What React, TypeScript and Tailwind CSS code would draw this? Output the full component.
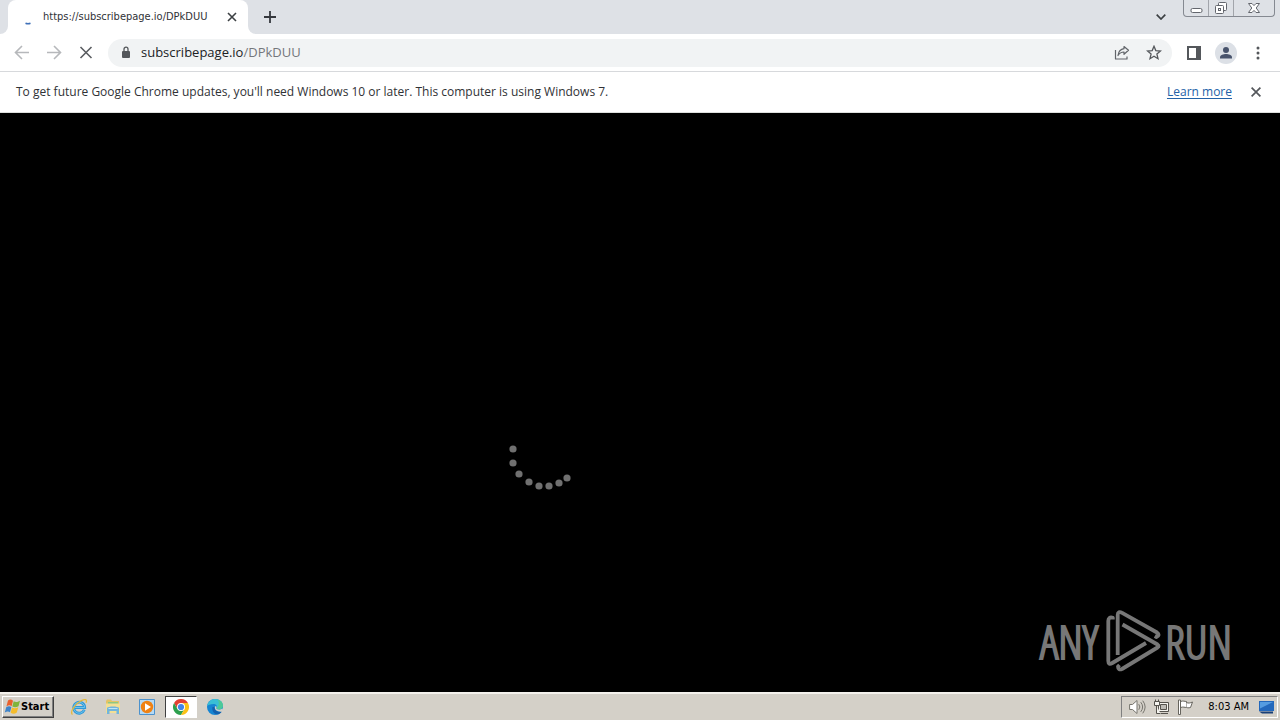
import type { ReactNode } from "react";

const dots = [
  [13, 14], [13, 28], [19, 39], [29, 47], [39, 51], [49, 51], [59, 48], [67, 43],
];

function IconButton({ label, className = "", children }: { label: string; className?: string; children: ReactNode }) {
  return (
    <button type="button" aria-label={label} className={`flex shrink-0 items-center justify-center ${className}`}>
      {children}
    </button>
  );
}

function TabStrip() {
  return (
    <header className="flex h-[34px] items-start bg-[#dee1e6] pr-[5px]">
      <div className="flex h-full w-2 items-end bg-white">
        <span className="h-full w-2 rounded-br-lg bg-[#dee1e6]" />
      </div>
      <div className="flex h-full w-60 items-center rounded-t-lg bg-white pr-2 pl-3">
        <svg width="16" height="16" viewBox="0 0 16 16" className="mr-[7px] shrink-0" fill="none" aria-hidden="true">
          <path d="M5.500 14.300Q8 15.200 10.500 14.300" stroke="#3f70b8" strokeWidth="1.700" />
        </svg>
        <span className="flex-1 text-[11px] whitespace-nowrap text-[#303236]">https://subscribepage.io/DPkDUU</span>
        <IconButton label="Close tab" className="size-4">
          <svg width="10" height="10" viewBox="0 0 10 10" stroke="#3c4043" strokeWidth="1.600">
            <path d="M1 1l8 8M9 1L1 9" />
          </svg>
        </IconButton>
      </div>
      <div className="flex h-full w-2 items-end bg-white">
        <span className="h-full w-2 rounded-bl-lg bg-[#dee1e6]" />
      </div>
      <IconButton label="New tab" className="h-[34px] w-7">
        <svg width="12" height="12" viewBox="0 0 12 12" stroke="#35383d" strokeWidth="1.800">
          <path d="M6 0v12M0 6h12" />
        </svg>
      </IconButton>
      <div className="flex-1" />
      <IconButton label="Search tabs" className="mr-3 h-[34px] w-5">
        <svg width="10" height="6" viewBox="0 0 10 6" fill="none" stroke="#3c4043" strokeWidth="1.700">
          <path d="M.7.7L5 5 9.300.7" />
        </svg>
      </IconButton>
      <div className="flex h-[17px] overflow-hidden rounded-b border border-t-0 border-[#858991]">
        <IconButton label="Minimize" className="w-[25px] border-r border-[#a2a5ab]">
          <svg width="13" height="16" viewBox="0 0 13 16" fill="#fff" stroke="#63666d">
            <rect x="1" y="8.500" width="11" height="4" rx="1.500" />
          </svg>
        </IconButton>
        <IconButton label="Restore" className="w-[25px] border-r border-[#a2a5ab]">
          <svg width="14" height="16" viewBox="0 0 14 16" fill="#fff" stroke="#63666d">
            <rect x="4.500" y="2.500" width="8" height="8" rx="1" />
            <rect x="1.500" y="5.500" width="8" height="8" rx="1" />
            <rect x="4.500" y="8.500" width="2" height="2" />
          </svg>
        </IconButton>
        <IconButton label="Close window" className="w-[40px]">
          <svg width="14" height="16" viewBox="0 0 14 16" fill="#fff" stroke="#63666d" strokeLinejoin="round">
            <path d="M1.500 3.500h3.500L7 5.600l2-2.100h3.500L9.200 8l3.300 4.500H9L7 10.400 5 12.500H1.500L4.800 8z" />
          </svg>
        </IconButton>
      </div>
    </header>
  );
}

function Toolbar() {
  return (
    <nav className="flex h-[38px] items-center border-b border-[#d7d9dc] bg-white px-1.5">
      <IconButton label="Back" className="size-8">
        <svg width="16" height="16" viewBox="0 0 16 16" fill="none" stroke="#b6b8bb" strokeWidth="1.600">
          <path d="M15 7.500H2M8 1L1.500 7.500 8 14" />
        </svg>
      </IconButton>
      <IconButton label="Forward" className="size-8">
        <svg width="16" height="16" viewBox="0 0 16 16" fill="none" stroke="#b6b8bb" strokeWidth="1.600">
          <path d="M1 7.500h13M8 1l6.500 6.500L8 14" />
        </svg>
      </IconButton>
      <IconButton label="Stop loading" className="size-8">
        <svg width="14" height="14" viewBox="0 0 14 14" stroke="#5a5d61" strokeWidth="1.600">
          <path d="M1.500 1l11 11M12.500 1l-11 11" />
        </svg>
      </IconButton>
      <div className="ml-1.5 flex h-7 flex-1 items-center rounded-full bg-[#f1f3f4] pr-2 pl-3">
        <svg width="12" height="14" viewBox="0 0 12 14" className="mr-2 shrink-0" aria-hidden="true">
          <rect x="2" y="5" width="8" height="7" rx="1" fill="#54575b" />
          <path d="M4 5.500V3.200a2 2 0 0 1 4 0v2.300" fill="none" stroke="#54575b" strokeWidth="1.300" />
        </svg>
        <a href="#address" className="flex-1 pl-px font-['Open_Sans',sans-serif] text-[13px] whitespace-nowrap text-[#202124]">
          subscribepage.io<span className="text-[#74777b]">/DPkDUU</span>
        </a>
        <IconButton label="Share" className="mr-3 size-5">
          <svg width="16" height="16" viewBox="0 0 16 16" fill="none" stroke="#62656a" strokeWidth="1.200" strokeLinejoin="round">
            <path d="M1.500 5v9h11.500V11.500M10 1.500l4.500 3.800L10 9.300V7C7.500 7 5.600 8 4 10.500c.4-3.300 2.500-6.300 6-6.800z" />
          </svg>
        </IconButton>
        <IconButton label="Bookmark this tab" className="size-5">
          <svg width="16" height="16" viewBox="0 0 16 16" fill="none" stroke="#54575b" strokeWidth="1.300">
            <path d="M8 1.300l1.800 4.300 4.700.4-3.600 3.100L12 13.700 8 11.200l-4 2.500 1.100-4.600L1.500 6l4.700-.4z" />
          </svg>
        </IconButton>
      </div>
      <IconButton label="Side panel" className="ml-1.5 size-8">
        <svg width="14" height="14" viewBox="0 0 14 14" fill="#54575b">
          <path fillRule="evenodd" d="M0 0h14v14H0zM2 2v10h7V2z" />
        </svg>
      </IconButton>
      <IconButton label="Profile" className="size-8">
        <svg width="22" height="22" viewBox="0 0 22 22">
          <circle cx="11" cy="11" r="11" fill="#dce0e6" />
          <circle cx="11" cy="8" r="3" fill="#48536c" />
          <path d="M5 16.500v-1.200C5 13 8.500 12 11 12s6 1 6 3.300v1.200z" fill="#48536c" />
        </svg>
      </IconButton>
      <IconButton label="Menu" className="size-8">
        <svg width="4" height="14" viewBox="0 0 4 14" fill="#54575b">
          <circle cx="2" cy="2" r="1.500" />
          <circle cx="2" cy="7" r="1.500" />
          <circle cx="2" cy="12" r="1.500" />
        </svg>
      </IconButton>
    </nav>
  );
}

function UpdateNotice() {
  return (
    <div className="flex h-[41px] items-center border-b border-[#dde0dd] bg-white px-4 font-['Open_Sans',sans-serif] text-xs text-[#303236]">
      <p className="flex-1">
        To get future Google Chrome updates, you'll need Windows 10 or later. This computer is using Windows 7.
      </p>
      <a href="#learn" className="text-[#2262a8] underline underline-offset-2">Learn more</a>
      <IconButton label="Dismiss" className="ml-4 size-4">
        <svg width="10" height="10" viewBox="0 0 10 10" stroke="#54575b" strokeWidth="1.700">
          <path d="M.6.6l8.800 8.800M9.400.6L.6 9.400" />
        </svg>
      </IconButton>
    </div>
  );
}

function Watermark() {
  return (
    <div className="absolute right-12 bottom-5 flex items-center gap-1 font-['Open_Sans_Condensed_Light','Roboto_Condensed',sans-serif] text-[46px] leading-none text-[#777] [-webkit-text-stroke:2px_#777]">
      <span className="mr-1">ANY</span>
      <svg width="55" height="62" viewBox="0 0 55 62" fill="none" stroke="#777" strokeWidth="3.800" strokeLinejoin="round" aria-hidden="true">
        <path d="M6.800 9.500V7.800C4 6.500 2.300 8.500 2.300 11v40c0 3 1.500 3.500 4 2L40 33" />
        <path d="M11.700 45V5c0-3 2-3.500 4-2.300L51 22.500c2.300 1.500 2 3.500-.5 4.500l-1.700-1" />
        <path d="M16.500 14.500L51.500 34.500c1.500 1 1.500 2 0 3L16 59c-2.500 1-4 0-4-2.500l1.500-1.500" />
      </svg>
      <span>RUN</span>
    </div>
  );
}

function PageView() {
  return (
    <main className="relative flex-1 overflow-hidden bg-black">
      <svg width="80" height="60" viewBox="0 0 80 60" className="absolute top-[322px] left-[39.1%]" fill="#707070" role="img" aria-label="Loading">
        {dots.map(([x, y]) => (
          <circle key={`${x}-${y}`} cx={x} cy={y} r="3.600" />
        ))}
      </svg>
      <Watermark />
    </main>
  );
}

function Taskbar() {
  return (
    <footer className="flex h-7 items-center border-t-2 border-[#f3f1ec] bg-[#d4d0c8] px-0.5">
      <button
        type="button"
        className="flex h-[22px] w-[52px] items-center border border-t-white border-r-[#404040] border-b-[#404040] border-l-white pl-px text-[11px] font-bold text-black shadow-[inset_-1px_-1px_0_#808080]"
      >
        <svg width="17" height="16" viewBox="0 0 17 16" className="shrink-0" aria-hidden="true">
          <path d="M4 1.500c2-1.500 3.500-1 5 .3L7.600 7.200c-1.500-1.200-3-1.200-5.200.2z" fill="#e9602c" />
          <path d="M9.700 2.300c2 1.200 3.700 1 6.300-.6l-1.500 5.500c-2.300 1.400-4 1.400-6.200.3z" fill="#7fb43c" />
          <path d="M2.200 8.300c2-1.300 3.500-1.300 5.200-.2L6 13.300c-1.500-1.200-3-1.200-5.200.2z" fill="#3d83c9" />
          <path d="M8 8.500c2.200 1.200 4 1 6.300-.3L12.800 13.500c-2 1.500-4 1.500-6.200.3z" fill="#f4bc2c" />
        </svg>
        <span>Start</span>
      </button>
      <div className="ml-2 flex flex-1 items-center">
        <IconButton label="Internet Explorer" className="h-6 w-[34px]">
          <svg width="18" height="18" viewBox="0 0 18 18" fill="none">
            <path d="M14.300 11.800A5.500 5.500 0 1 1 14.700 9.500H5" stroke="#2f98d8" strokeWidth="2.800" />
            <path d="M14.300 11.800A5.500 5.500 0 1 1 14.700 9.500H5" stroke="#6cc4ee" strokeWidth="1" />
            <path d="M2.500 16.500C-.5 14 5 6 11 2.800c4-2 6.500-1.500 5 2" stroke="#e5b93c" strokeWidth="1.300" />
          </svg>
        </IconButton>
        <IconButton label="Windows Explorer" className="h-6 w-[34px]">
          <svg width="18" height="18" viewBox="0 0 18 18">
            <path d="M2 3l1-1.500h4L8 3h7v12H2z" fill="#e3c465" />
            <path d="M4 4h10v4H4z" fill="#90c880" />
            <path d="M2 5.500h14V15H2z" fill="#f3df94" />
            <path d="M3 10c1-2 11-2 12 0v6h-2.500v-3h-7v3H3z" fill="#72b5dc" />
            <path d="M4.500 10.500h9" stroke="#bee5f5" />
          </svg>
        </IconButton>
        <IconButton label="Media Player" className="h-6 w-[34px]">
          <svg width="16" height="16" viewBox="0 0 16 16">
            <path d="M.5.5h15v15H.5z" fill="#b5daf5" stroke="#4c92cd" />
            <circle cx="8" cy="8" r="6.200" fill="#ef8214" />
            <path d="M6 4.300v7.400L12 8z" fill="#fff" />
          </svg>
        </IconButton>
        <IconButton label="Google Chrome" className="ml-px h-[22px] w-8 border border-t-[#404040] border-r-white border-b-white border-l-[#404040] bg-white">
          <svg width="16" height="16" viewBox="0 0 16 16">
            <path d="M1.070 4A8 8 0 0 1 14.930 4H8L4.500 10z" fill="#e34133" />
            <path d="M1.070 4L4.500 10h7L8 16A8 8 0 0 1 1.070 4z" fill="#2da04e" />
            <path d="M8 4h6.930A8 8 0 0 1 8 16l3.500-6z" fill="#fbc116" />
            <circle cx="8" cy="8" r="4" fill="#fff" />
            <circle cx="8" cy="8" r="3.100" fill="#4285e8" />
          </svg>
        </IconButton>
        <IconButton label="Microsoft Edge" className="ml-px h-6 w-[34px]">
          <svg width="16" height="16" viewBox="0 0 16 16">
            <circle cx="8" cy="8" r="8" fill="#1685d2" />
            <path d="M.2 7C1 2.500 4.500 0 8.300 0 13 0 16 3.300 16 6.500c0 2.500-1.800 4-4.300 4-1.500 0-2.500-.6-2.200-1.200 1-1.500.3-4.300-3-4.300C3.500 5 .7 6 .2 7z" fill="#39bfd5" />
            <path d="M10 0.500c4 .8 6 3.300 6 6 0 2.500-1.800 4-4.300 4-1.500 0-2.500-.6-2.200-1.200C12 7 13 3 10 .5z" fill="#5bd06f" opacity=".6" />
            <path d="M5.500 8c-1 4 2 8 6 7.200 1.500-.5 2.800-1.600 3.500-3-3 1.600-7.500 0-7.500-4.200z" fill="#1461ae" />
            <path d="M8 7.500c.8-.6 1.600 0 1.600.8 0 .4-.5.700-.3 1.300.5 1.200 4 1.700 6.500 0L16 12.500C11 13.500 7 11 8 7.500z" fill="#d4d0c8" />
          </svg>
        </IconButton>
      </div>
      <div className="flex h-[22px] items-center border border-t-[#808080] border-r-white border-b-white border-l-[#808080] px-0.5 text-[11px] text-black">
        <IconButton label="Volume" className="ml-1 w-[18px]">
          <svg width="17" height="16" viewBox="0 0 17 16" fill="none" stroke="#77756e" strokeLinecap="round">
            <path d="M1 5.500h2.500L8 1.500v13l-4.500-4H1z" fill="#fff" strokeLinejoin="round" />
            <path d="M10 5.500q2 2.500 0 5M12 3.500q3.500 4.500 0 9M14 2q4.500 6 0 12" />
          </svg>
        </IconButton>
        <IconButton label="Network" className="ml-1.5 w-[18px]">
          <svg width="17" height="16" viewBox="0 0 17 16" stroke="#55534d" fill="#f5f4ef">
            <path d="M5.500 3.500h10v9h-10z" />
            <path d="M7.500 5.500h6v5h-6z" fill="#bdbbb5" />
            <path d="M1.500 2.500h5v4h-5zM2.500.5v2M5.500.5v2M3.500 6.500v8h4M8 14.500h7" />
          </svg>
        </IconButton>
        <IconButton label="Action Center" className="ml-1.5 w-[18px]">
          <svg width="17" height="16" viewBox="0 0 17 16" stroke="#66645d" fill="#fff" strokeLinejoin="round">
            <path d="M3.500 2.500c3-1 4 0 6 0v6c-2 0-3-1-6 0z" />
            <path d="M9.500 3.500c2 1 3.500.5 6-.5l-2 5.500c-2 .5-3 .3-4 0" />
            <path d="M1.500 1v14.500h2V1z" />
          </svg>
        </IconButton>
        <time className="ml-3.5 whitespace-nowrap">8:03 AM</time>
        <IconButton label="Show desktop" className="ml-2 w-[18px]">
          <svg width="17" height="16" viewBox="0 0 17 16">
            <path d="M1 2h15v10H1z" fill="#2368bc" />
            <path d="M2 3h13L2 9.500z" fill="#559ce1" />
            <path d="M1 12.500h14v2H4z" fill="#183f77" />
          </svg>
        </IconButton>
      </div>
    </footer>
  );
}

export default function App() {
  return (
    <div className="flex min-h-screen flex-col font-['DejaVu_Sans_Condensed','DejaVu_Sans',sans-serif]">
      <TabStrip />
      <Toolbar />
      <UpdateNotice />
      <PageView />
      <Taskbar />
    </div>
  );
}
